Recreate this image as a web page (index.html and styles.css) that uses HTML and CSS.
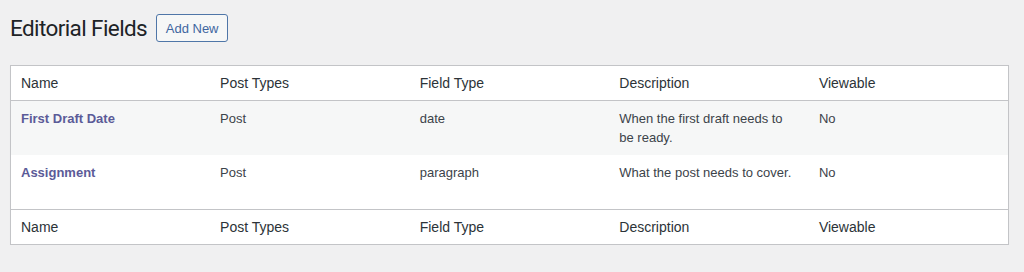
FILE: index.html
```html
<!DOCTYPE html>
<html lang="en">
<head>
<meta charset="utf-8">
<title>Editorial Fields</title>
<link rel="stylesheet" href="styles.css">
</head>
<body>
<div class="wrap">
  <div class="page-head">
    <h1 class="page-title">Editorial Fields</h1>
    <a class="add-new" href="#">Add New</a>
  </div>
  <table class="fields">
    <thead>
      <tr><th>Name</th><th>Post Types</th><th>Field Type</th><th>Description</th><th>Viewable</th></tr>
    </thead>
    <tbody>
      <tr class="alt">
        <td><a class="row-title" href="#">First Draft Date</a></td>
        <td>Post</td>
        <td>date</td>
        <td>When the first draft needs to be ready.</td>
        <td>No</td>
      </tr>
      <tr>
        <td><a class="row-title" href="#">Assignment</a></td>
        <td>Post</td>
        <td>paragraph</td>
        <td>What the post needs to cover.</td>
        <td>No</td>
      </tr>
    </tbody>
    <tfoot>
      <tr><th>Name</th><th>Post Types</th><th>Field Type</th><th>Description</th><th>Viewable</th></tr>
    </tfoot>
  </table>
</div>
</body>
</html>
```

FILE: styles.css
```css
html, body {
  margin: 0;
  padding: 0;
  background: #f0f0f1;
  font-family: "Liberation Sans", Arial, sans-serif;
  color: #3c434a;
}

.wrap {
  padding: 0 15px 0 10px;
}

.page-head {
  display: flex;
  align-items: center;
  gap: 9px;
  padding-top: 14px;
  height: 28px;
  margin-bottom: 23px;
}

.page-title {
  margin: 0;
  font-family: Roboto, "Liberation Sans", sans-serif;
  font-size: 22.5px;
  font-weight: 400;
  letter-spacing: -0.6px;
  line-height: 28px;
  color: #1d2327;
}

.add-new {
  display: inline-flex;
  align-items: center;
  justify-content: center;
  box-sizing: border-box;
  width: 72px;
  height: 28px;
  border: 1px solid #4f76a8;
  border-radius: 3px;
  background: #f6f7f7;
  color: #3f66a0;
  font-size: 13px;
  text-decoration: none;
}

.fields {
  width: 100%;
  table-layout: fixed;
  border-collapse: collapse;
  background: #fff;
  border: 1px solid #c3c4c7;
  box-shadow: 0 1px 1px rgba(0,0,0,.04);
}

.fields th {
  text-align: left;
  font-weight: 400;
  font-size: 14px;
  color: #2c3338;
  padding: 0 10px;
  height: 34px;
  vertical-align: middle;
}

.fields thead th {
  border-bottom: 1px solid #c3c4c7;
}

.fields tfoot th {
  border-top: 1px solid #c3c4c7;
}

.fields td {
  font-size: 13px;
  line-height: 19px;
  padding: 8px 10px;
  height: 38px;
  vertical-align: top;
}

.fields tr.alt td {
  background: #f6f7f7;
}

.row-title {
  color: #5b5b98;
  font-weight: 700;
  font-size: 13px;
  text-decoration: none;
}
```
